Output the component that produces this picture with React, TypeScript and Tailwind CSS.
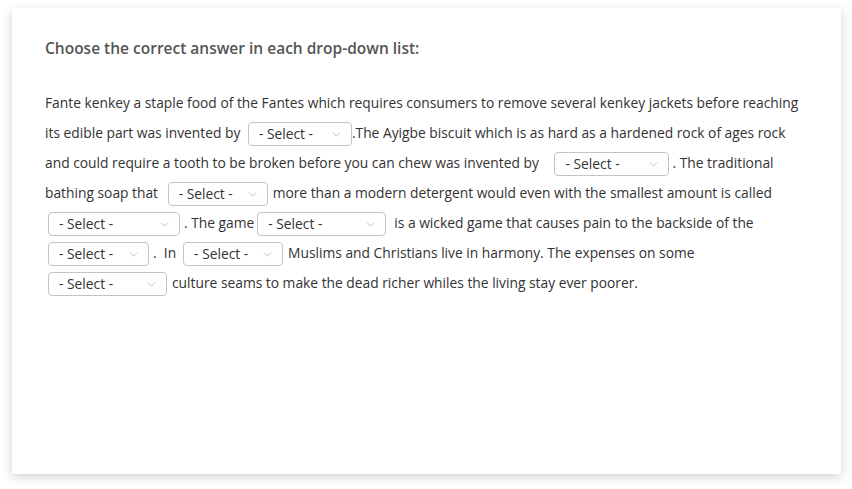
import { ChevronDown } from 'lucide-react'

function Pick({ w, className = '' }: { w: string; className?: string }) {
  return (
    <span
      className={`inline-flex h-[24px] items-center justify-between rounded-[4px] border border-[#c4c4c4] bg-white pl-[10px] pr-[8px] align-middle text-[13.8px] text-[#333] ${w} ${className}`}
    >
      <span>- Select -</span>
      <ChevronDown className="h-[13px] w-[13px] text-[#b5b5b5]" strokeWidth={1.5} />
    </span>
  )
}

export default function App() {
  return (
    <div className="min-h-[489px] bg-white pl-[12px] pr-[11px] pt-[8px] pb-[15px] font-['Open_Sans',sans-serif]">
      <div className="h-[466px] bg-white px-[33px] pt-[28px] shadow-[0_3px_10px_rgba(0,0,0,0.18)]">
        <h2 className="text-[15.5px] font-semibold leading-[24px] text-[#555]">
          Choose the correct answer in each drop-down list:
        </h2>
        <div className="mt-[28px] text-[13.8px] leading-[30px] text-[#333] whitespace-nowrap">
          <div>Fante kenkey a staple food of the Fantes which requires consumers to remove several kenkey jackets before reaching</div>
          <div>
            its edible part was invented by <Pick w="w-[104px]" className="ml-[4px]" />
            .The Ayigbe biscuit which is as hard as a hardened rock of ages rock
          </div>
          <div>
            and could require a tooth to be broken before you can chew was invented by{' '}
            <Pick w="w-[115px]" className="ml-[12px]" />
            <span className="ml-[3px]">. The traditional</span>
          </div>
          <div>
            bathing soap that <Pick w="w-[100px]" className="ml-[6px]" />
            <span className="ml-[5px]">more than a modern detergent would even with the smallest amount is called</span>
          </div>
          <div>
            <Pick w="w-[132px]" className="ml-[3px]" />
            <span className="ml-[4px]">. The game</span>
            <Pick w="w-[129px]" className="ml-[3px]" />
            <span className="ml-[8px]">is a wicked game that causes pain to the backside of the</span>
          </div>
          <div>
            <Pick w="w-[101px]" className="ml-[3px]" />
            <span className="ml-[4px]">.&nbsp; In</span>
            <Pick w="w-[100px]" className="ml-[7px]" />
            <span className="ml-[5px]">Muslims and Christians live in harmony. The expenses on some</span>
          </div>
          <div>
            <Pick w="w-[119px]" className="ml-[3px]" />
            <span className="ml-[5px]">culture seams to make the dead richer whiles the living stay ever poorer.</span>
          </div>
        </div>
      </div>
    </div>
  )
}
